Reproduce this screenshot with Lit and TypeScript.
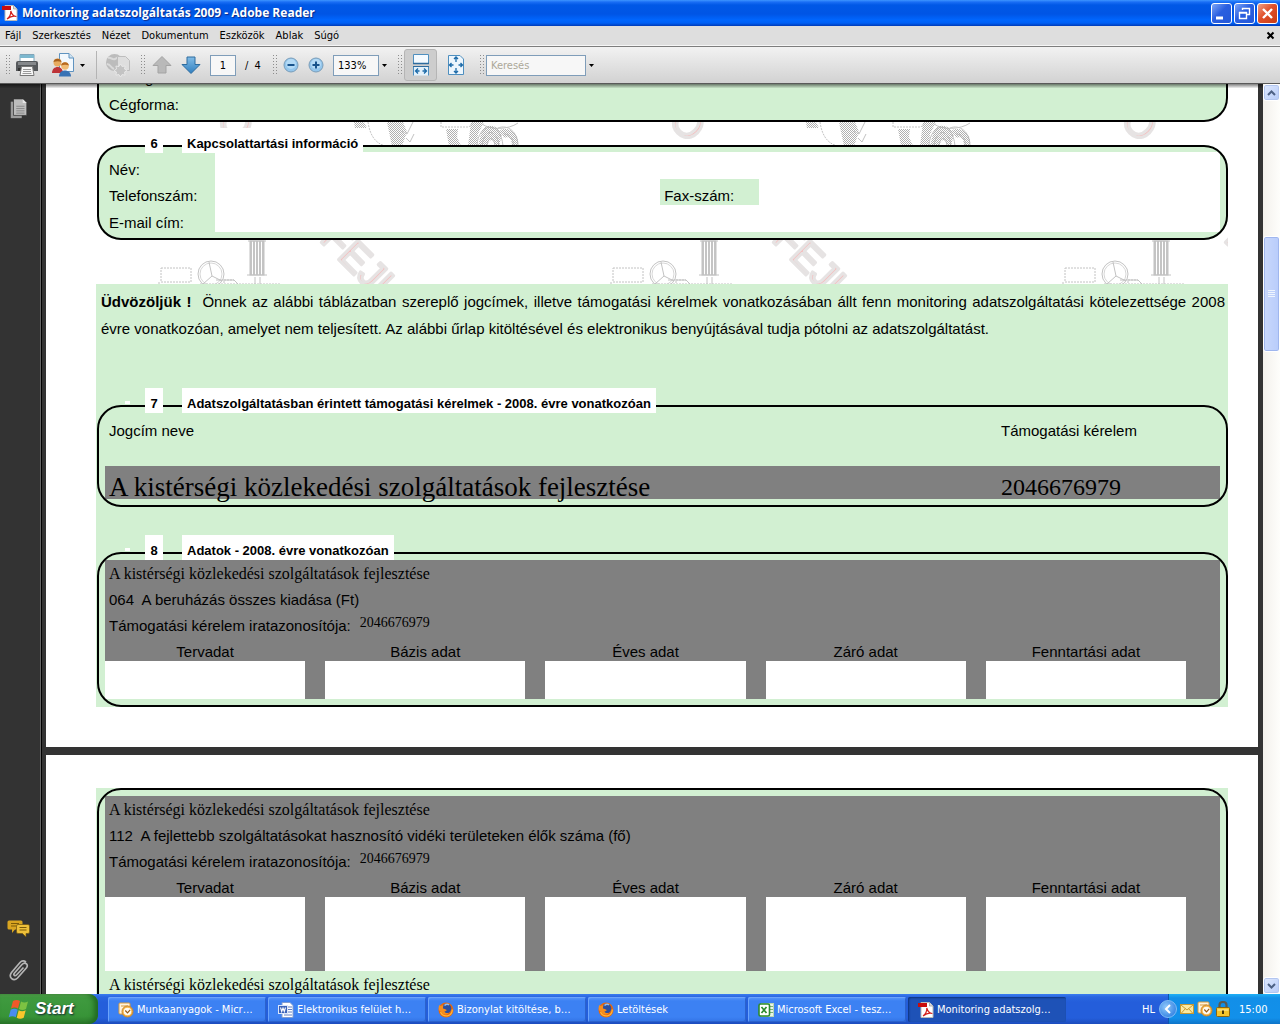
import { LitElement, html, svg, css } from "lit";
import { customElement, property } from "lit/decorators.js";

const pdfIcon = html`<svg class="i16" viewBox="0 0 16 16" aria-hidden="true">
  <path d="M3 .5h8.500l3.500 3.500v11.500H3z" fill="#fff" stroke="#b9b9b9"/>
  <path d="M11.500.5v3.500H15" fill="#ddd" stroke="#999" stroke-width=".7"/>
  <rect x="0" y="1" width="9" height="4" fill="#c90d0d"/>
  <path d="M5 14c2-1.500 4-5 3.800-8 1 3.500 3 5.500 5.500 5.500-3-1-6 0-9.300 2.500z" fill="none" stroke="#d3201c" stroke-width="1.200"/>
</svg>`;
const outlookIcon = html`<svg class="i16" viewBox="0 0 16 16" aria-hidden="true">
  <rect x="1" y="1" width="11" height="11" rx="1" fill="#fff3dc" stroke="#d99a3b"/>
  <path d="M3 4h7" stroke="#d99a3b"/>
  <circle cx="9.500" cy="9.500" r="5.500" fill="#f5b548" stroke="#c9852a"/>
  <circle cx="9.500" cy="9.500" r="3.800" fill="#fffaf0"/>
  <path d="M7.300 8.500l2.200 2.300 2.700-3" fill="none" stroke="#9a5a14" stroke-width="1.200"/>
</svg>`;
const wordIcon = html`<svg class="i16" viewBox="0 0 16 16" aria-hidden="true">
  <path d="M4 .5h8l3 3v12H4z" fill="#fff" stroke="#7f9bd0"/>
  <path d="M10 5h4M10 7.500h4M10 10h4M6 13h8" stroke="#5f7fc4"/>
  <rect x=".5" y="3.500" width="9" height="8" fill="#3b62b8" stroke="#dbe6fa"/>
  <path d="M2.500 5.500l1.200 4 1.300-3.500 1.300 3.500 1.200-4" fill="none" stroke="#fff" stroke-width="1.100"/>
</svg>`;
const excelIcon = html`<svg class="i16" viewBox="0 0 16 16" aria-hidden="true">
  <rect x="3.500" y="1.500" width="12" height="13" fill="#e9f5e6" stroke="#b9d6b4"/>
  <path d="M12 4.500h3M12 7.500h3M12 10.500h3" stroke="#7db376"/>
  <rect x="1" y="2" width="10.500" height="12" rx="1.500" fill="#fff" stroke="#2d8a2d" stroke-width="1.600"/>
  <path d="M3.500 5l5 6M8.500 5l-5 6" stroke="#2d8a2d" stroke-width="1.700"/>
</svg>`;
const firefoxIcon = html`<svg class="i16" viewBox="0 0 16 16" aria-hidden="true">
  <circle cx="8" cy="8" r="7.500" fill="#e8670e"/>
  <circle cx="8.500" cy="6.500" r="4.800" fill="#2b4fa0"/>
  <path d="M6.500 3.500c1-1 3-1.500 4.500-.8" stroke="#8fc0f0" stroke-width="1.500" fill="none"/>
  <path d="M1.200 3c-.5 1.500-.7 3-.4 5L4 11c1.500 2 5 2 6.500 0-2 .3-3.500-.3-4-1.500 1-.3 2-.7 2.300-1.500C7.500 7 6 7 5 6.500 5 5 5 4.200 5.800 3.300 4.300 3.200 3.500 3.500 3 4.200z" fill="#f78d1e"/>
  <path d="M2.500 10c1.500 3.200 4 4.300 7 3.800 3-.6 4.700-3 4.800-6.300" fill="none" stroke="#fcb93a" stroke-width="1.300"/>
</svg>`;

const icons = {
  print: html`<svg class="i24" viewBox="0 0 24 24" aria-hidden="true">
    <path d="M5 1.500h14V9H5z" fill="#fff" stroke="#7fa4b8"/><path d="M5 2h14v3H5z" fill="#7db8cf"/>
    <path d="M3 8h18a2 2 0 0 1 2 2v8H1v-8a2 2 0 0 1 2-2z" fill="#55585b"/>
    <path d="M3 9h18v3H3z" fill="#85888b"/><path d="M3 15h3v3H3z" fill="#333"/>
    <path d="M6.500 13.500h11l1.500 9H5z" fill="#f7f7f7" stroke="#777"/>
    <path d="M8 16.500h8M8 18.500h8M7.500 20.500h9" stroke="#999"/></svg>`,
  people: html`<svg class="i24" viewBox="0 0 24 24" aria-hidden="true">
    <path d="M8.500.5H18l4.500 4.500v13.500h-14z" fill="#f2f8fd" stroke="#5f93c0"/><path d="M18 .5V5h4.500" fill="#cfe3f2" stroke="#5f93c0"/>
    <circle cx="6.500" cy="9.500" r="4" fill="#e8ac60"/><path d="M2.500 9c.5-4.500 7.500-4.500 8 0-2-1-5-1.300-8 0z" fill="#a8601c"/>
    <path d="M1 20c0-8 11-8 11 0z" fill="#bd3338"/>
    <circle cx="14" cy="13" r="3.800" fill="#f0bb74"/><path d="M10 12.500c.5-4.500 7.500-4.500 8 0-2-1-5-1.300-8 0z" fill="#b86a20"/>
    <path d="M8 23.500c0-8 12-8 12 0z" fill="#3973b5"/></svg>`,
  review: html`<svg class="i26" viewBox="0 0 26 24" aria-hidden="true">
    <circle cx="9.500" cy="9.500" r="8.500" fill="#bcbcbc"/><path d="M3 5c3-1 4 2 7 1s3-3 6-2M2 11c3 0 4 4 7 5" stroke="#dadada" stroke-width="2" fill="none"/>
    <path d="M12.500 3.500h8l4 4v10h-12z" fill="#dedede" stroke="#bdbdbd"/>
    <path d="M15.500 11l1.600 2.600 3-.6-.6 3 2.600 1.500-2.600 1.600.6 3-3-.6-1.600 2.500-1.600-2.500-3 .6.6-3L9 17.500l2.500-1.500-.6-3 3 .6z" fill="#c3c3c3" stroke="#ececec" stroke-width=".8"/></svg>`,
  up: html`<svg class="i20" viewBox="0 0 20 20" aria-hidden="true"><path d="M10 1.500l9 9h-5v7.500H6v-7.500H1z" fill="#b9b9b9" stroke="#a3a3a3"/></svg>`,
  down: html`<svg class="i20" viewBox="0 0 20 20" aria-hidden="true">
    <defs><linearGradient id="dn" x2="0" y2="1"><stop offset="0" stop-color="#82bce6"/><stop offset="1" stop-color="#2f7fc0"/></linearGradient></defs>
    <path d="M10 18.500l9-9h-5V2H6v7.500H1z" fill="url(#dn)" stroke="#2e6c9f"/></svg>`,
  minus: html`<svg class="i16" viewBox="0 0 16 16" aria-hidden="true"><circle cx="8" cy="8" r="7" fill="#93c6ec" stroke="#7a9db9"/><circle cx="8" cy="7" r="5" fill="#b4daf5"/><path d="M4.500 8h7" stroke="#17538c" stroke-width="2"/></svg>`,
  plus: html`<svg class="i16" viewBox="0 0 16 16" aria-hidden="true"><circle cx="8" cy="8" r="7" fill="#93c6ec" stroke="#7a9db9"/><circle cx="8" cy="7" r="5" fill="#b4daf5"/><path d="M4.500 8h7M8 4.500v7" stroke="#17538c" stroke-width="2"/></svg>`,
  fitWidth: html`<svg class="i20" viewBox="0 0 20 22" aria-hidden="true">
    <path d="M2.500.5h15v9h-15z" fill="#f4faff" stroke="#4e8fbf"/><path d="M2 9.500h16" stroke="#2e6c9f" stroke-width="1.500"/>
    <path d="M2.500 21.500v-9h15v9" fill="#e3f1fb" stroke="#4e8fbf"/><path d="M2 12.500h16" stroke="#2e6c9f"/>
    <path d="M4.500 17h4M15.500 17h-4M7 14.500L4.500 17 7 19.500M13 14.500l2.500 2.500-2.500 2.500" fill="none" stroke="#1c6aa8" stroke-width="1.300"/></svg>`,
  fitPage: html`<svg class="i20" viewBox="0 0 20 22" aria-hidden="true">
    <path d="M2.500 1.500H14l3.500 3.500v15.500h-15z" fill="#edf6fd" stroke="#4e8fbf"/>
    <path d="M10 3v5M10 14v5M3.500 11h4M16.500 11h-4M8 5l2-2 2 2M8 17l2 2 2-2M5.500 9l-2 2 2 2M14.500 9l2 2-2 2" fill="none" stroke="#1c6aa8" stroke-width="1.300"/></svg>`,
  pages: html`<svg class="i20" viewBox="0 0 20 24" aria-hidden="true">
    <path d="M1 4h12v18H1z" fill="#9b9b9b"/><path d="M4 1h10l4.500 4.500V19H4z" fill="#bdbdbd" stroke="#333" stroke-width=".8"/><path d="M14 1v4.500h4.500z" fill="#e6e6e6"/>
    <path d="M7 9h9M7 11.500h9M7 14h9M7 16.500h9" stroke="#858585"/></svg>`,
  comments: html`<svg class="i24" viewBox="0 0 24 18" aria-hidden="true">
    <path d="M2 .5h12a1.500 1.500 0 0 1 1.500 1.500v6A1.500 1.500 0 0 1 14 9.500H8L5 13V9.500H2A1.500 1.500 0 0 1 .5 8V2A1.500 1.500 0 0 1 2 .5z" fill="#d9a520"/>
    <path d="M4 3.500h8M4 6h5" stroke="#7c5a08"/>
    <path d="M11 4.500h10A1.500 1.500 0 0 1 22.500 6v6a1.500 1.500 0 0 1-1.500 1.500h-2V17l-3.500-3.500H11A1.500 1.500 0 0 1 9.500 12V6A1.500 1.500 0 0 1 11 4.500z" fill="#eec03a" stroke="#6b5210" stroke-width=".7"/>
    <path d="M12.500 7.500h7M12.500 10h7" stroke="#7c5a08"/></svg>`,
  clip: html`<svg class="i24" viewBox="0 0 24 24" aria-hidden="true">
    <path d="M16.500 8.500L9.500 16c-1.500 1.500-3.500 0-2.200-1.800L15 5.500c3-3 7 0 4.500 3.300L10.500 19c-4 4-9.500-.5-6-5.500L13 3.500c1.500-1.700 4-2 6-.5" fill="none" stroke="#b5b5b5" stroke-width="1.700"/></svg>`,
  flag: html`<svg class="i24" viewBox="0 0 24 24" aria-hidden="true">
    <path d="M5 4c2.500-1.500 5-1.300 7 0l-2 7.500c-2-1.300-4.500-1.500-7 0z" fill="#f0582a"/>
    <path d="M13 4.500c2 1.300 4.500 1.500 7 0l-2 7.500c-2.500 1.500-5 1.300-7 0z" fill="#7cc242"/>
    <path d="M2.700 12.700c2.500-1.500 5-1.300 7 0l-2 7.500c-2-1.300-4.500-1.500-7 0z" fill="#4a8df0"/>
    <path d="M10.700 13.200c2 1.300 4.500 1.500 7 0l-2 7.500c-2.500 1.500-5 1.300-7 0z" fill="#fbc62c"/></svg>`,
  mail: html`<svg class="i16" viewBox="0 0 16 16" aria-hidden="true"><rect x="1.500" y="3.500" width="13" height="9" fill="#fbe9a0" stroke="#c79a32"/><path d="M2 4l6 5 6-5M2 12.500l4.500-5M14 12.500l-4.500-5" fill="none" stroke="#c79a32"/></svg>`,
  lock: html`<svg class="i16" viewBox="0 0 16 16" aria-hidden="true"><path d="M4.500 7V4c0-4 7-4 7 0v3" fill="none" stroke="#5a5a50" stroke-width="2.200"/><rect x="1.500" y="6.500" width="13" height="9" rx="1" fill="#f6c52c" stroke="#8a6410"/><path d="M2.500 9h11" stroke="#fff1b0"/><path d="M8 9.500v3.500" stroke="#4a3706" stroke-width="2"/></svg>`,
};

const shared = css`
  * { box-sizing: border-box; }
  button { font: inherit; color: inherit; border: 0; background: none; padding: 0; margin: 0; border-radius: 0; }
  input { font: inherit; color: inherit; border-radius: 0; margin: 0; outline: 0; min-width: 0; }
  svg { display: block; flex: none; }
  .i16 { width: 16px; height: 16px; }
  .i20 { width: 20px; height: 22px; }
  .i24 { width: 24px; height: 24px; }
  .i26 { width: 26px; height: 24px; }
`;

@customElement("title-bar")
class TitleBar extends LitElement {
  static styles = [shared, css`
    :host { display: block; flex: none; }
    .bar { display: flex; align-items: center; height: 26px; padding: 0 2px; gap: 4px; color: #fff;
      background: linear-gradient(#3d95ff 0, #1a6ef5 2px, #0058e6 5px, #0055e5 14px, #0066fe 20px, #0060f5 23px, #003bb8 26px);
      font: bold 12px/26px "Open Sans", sans-serif; }
    .name { flex: 1; margin: 0; font: inherit; text-shadow: 1px 1px 1px #0a2a88; white-space: nowrap; }
    .btns { display: flex; gap: 2px; }
    .btn { width: 21px; height: 21px; border: 1px solid #fff; border-radius: 3px; background: linear-gradient(135deg, #7ea6f7, #2a5fe0 45%, #2458d8); }
    .close { background: linear-gradient(135deg, #f0a085, #e0502a 45%, #c83c14); }
  `];
  render() {
    return html`<header class="bar">${pdfIcon}<h1 class="name">Monitoring adatszolgáltatás 2009 - Adobe Reader</h1>
      <div class="btns">
        <button class="btn" aria-label="Kis méret"><svg viewBox="0 0 19 19"><path d="M4 14h7" stroke="#fff" stroke-width="3"/></svg></button>
        <button class="btn" aria-label="Előző méret"><svg viewBox="0 0 19 19" fill="none" stroke="#fff"><path d="M7.500 6V4.500h7v6H12M7 4.500h8M4.500 8.500h7v6h-7zM4 9h8" stroke-width="1.400"/></svg></button>
        <button class="btn close" aria-label="Bezárás"><svg viewBox="0 0 19 19"><path d="M5 5l9 9M14 5l-9 9" stroke="#fff" stroke-width="2.400"/></svg></button>
      </div></header>`;
  }
}

@customElement("tool-bars")
class ToolBars extends LitElement {
  static styles = [shared, css`
    :host { display: block; flex: none; font: 11px/13px "DejaVu Sans Condensed", sans-serif; color: #000; }
    .menu { display: flex; align-items: center; gap: 11px; height: 20px; padding: 0 5px; background: #dedede; border-bottom: 1px solid #f6f6f6; }
    .doc { margin-left: auto; }
    .tools { display: flex; align-items: center; height: 38px; padding: 0 5px; border-top: 1px solid #7d7d7d; border-bottom: 1px solid #5a5a5a;
      background: linear-gradient(#f2f2f2, #d2d2d2); }
    .grp { display: flex; align-items: center; }
    .grip { width: 5px; height: 22px; background: radial-gradient(circle, #8d8d8d 1px, transparent 1px) 0 0 / 3px 3px; }
    .sep { width: 1px; height: 28px; background: #b4b4b4; }
    .drop { width: 11px; height: 22px; display: grid; place-items: center; }
    .field { height: 21px; border: 1px solid #7f9db9; background: #f7f7f7; padding: 0 4px; }
    .num { width: 26px; text-align: center; }
    .pct { width: 46px; }
    .find { width: 100px; }
    .find::placeholder { color: #aca899; opacity: 1; }
    .on { width: 33px; height: 32px; display: grid; place-items: center; border: 1px solid #b5b5b5; border-radius: 3px; background: #cdcdcd; }
    .file { gap: 8px; padding-left: 5px; width: 130px; }
    .people { margin-left: 4px; }
    .split { display: flex; align-items: center; gap: 2px; }
    .nav { gap: 9px; padding-left: 7px; width: 127px; }
    .zoom { gap: 9px; padding-left: 6px; width: 120px; }
    .view { gap: 9px; padding-left: 2px; width: 77px; }
    .search { padding-left: 2px; }
  `];
  render() {
    const arrow = html`<svg width="5" height="3" viewBox="0 0 5 3"><path d="M0 0h5L2.500 3z"/></svg>`;
    return html`
      <nav class="menu">
        ${["Fájl", "Szerkesztés", "Nézet", "Dokumentum", "Eszközök", "Ablak", "Súgó"].map(m => html`<button>${m}</button>`)}
        <button class="doc" aria-label="Dokumentum bezárása"><svg width="9" height="9" viewBox="0 0 9 9"><path d="M1.500 1.500l6 6M7.500 1.500l-6 6" stroke="#000" stroke-width="2"/></svg></button>
      </nav>
      <div class="tools" role="toolbar">
        <div class="grip"></div>
        <div class="grp file">
          <button aria-label="Nyomtatás">${icons.print}</button>
          <button class="split people" aria-label="Együttműködés">${icons.people}<span class="drop">${arrow}</span></button>
          <span class="sep"></span>
          <button aria-label="Véleményezés" disabled>${icons.review}</button>
        </div>
        <div class="grip"></div>
        <div class="grp nav">
          <button aria-label="Előző oldal" disabled>${icons.up}</button>
          <button aria-label="Következő oldal">${icons.down}</button>
          <input class="field num" aria-label="Oldal" .value=${"1"}><span>/&nbsp; 4</span>
        </div>
        <div class="grip"></div>
        <div class="grp zoom">
          <button aria-label="Kicsinyítés">${icons.minus}</button>
          <button aria-label="Nagyítás">${icons.plus}</button>
          <span class="grp"><input class="field pct" aria-label="Nagyítás mértéke" .value=${"133%"}><button class="drop" aria-label="Nagyítások">${arrow}</button></span>
        </div>
        <div class="grip"></div>
        <div class="grp view">
          <button class="on" aria-label="Ablakszélesség">${icons.fitWidth}</button>
          <button aria-label="Teljes oldal">${icons.fitPage}</button>
        </div>
        <div class="grip"></div>
        <div class="grp search">
          <input class="field find" aria-label="Keresés" placeholder="Keresés"><button class="drop" aria-label="Keresési lehetőségek">${arrow}</button>
        </div>
      </div>`;
  }
}

@customElement("form-page")
class FormPage extends LitElement {
  static styles = [shared, css`
    :host { display: block; color: #000; font: 15px/26px "Liberation Sans", sans-serif; }
    .page { position: relative; background: #fff; padding: 0 30px 40px 50px; overflow: hidden; }
    .page + .page { margin-top: 8px; padding-top: 33px; }
    .marks { position: absolute; left: 51px; top: 0; width: calc(100% - 81px); height: 210px; }
    .body { position: relative; }
    .frame { position: relative; margin-left: 1px; padding: 6px; border: 2px solid transparent; border-radius: 24px; }
    .frame::after { content: ""; position: absolute; inset: -2px; border: 2px solid #000; border-radius: 24px; pointer-events: none; }
    .tint { background: #d2f0d2 border-box; }
    .cut { border: solid #000; border-width: 0 2px 2px; border-radius: 0 0 24px 24px; padding: 0 10px 2px; height: 38px; display: flex; flex-direction: column; justify-content: flex-end; overflow: hidden; }
    .cut::after { display: none; }
    .cut .prev { padding-left: 36px; }
    .cut div { line-height: 27px; }
    .legend { position: relative; z-index: 1; display: flex; width: fit-content; height: 25px; padding-left: 49px; margin-bottom: -8px;
      font-weight: bold; font-size: 13px; line-height: 31px; white-space: nowrap; }
    .legend > * { background: #fff; margin: 0; font: inherit; }
    .legend .no { width: 18px; text-align: center; margin-right: 19px; }
    .legend .ti { padding: 0 5px; }
    .contact { margin-top: 6px; background: linear-gradient(#fff 17px, transparent 0); }
    .tick::before { content: ""; position: absolute; left: 29px; top: 13px; width: 5px; height: 3px; background: #fff; }
    .rows { padding-top: 5px; }
    .row { display: flex; height: 27px; }
    .row.mid { height: 26px; }
    .row label { flex: none; padding-left: 4px; line-height: 35px; height: 100%; width: 110px; background: #d2f0d2; }
    .row .fax { width: 99px; }
    .row.mid label { line-height: 33px; }
    .row input { flex: 1 1 0; border: 0; background: #fff; padding: 0 4px; }
    .row .wide { flex-grow: 461; }
    .row .tel { flex-grow: 445; }
    .green { background: #d2f0d2; margin-top: 44px; }
    .intro { margin: 0; padding: 4px 3px 0 5px; line-height: 27px; height: 104px; }
    .intro span { display: block; }
    .intro .just { text-align: justify; text-align-last: justify; }
    .grants { width: 100%; border-collapse: collapse; margin-top: 4px; }
    .grants th { text-align: left; font-weight: normal; height: 49px; padding: 0 4px 22px; }
    .grants th.a { width: 80%; }
    .grants td { background: #808080; height: 33px; padding: 10px 4px 0; line-height: 23px; font-size: 24px; }
    .grants td.big { font-size: 27px; }
    .serif { font-family: "Palatino Linotype", "Liberation Serif", serif; }
    .next { margin-top: 28px; }
    .entry { background: #808080; }
    .line { padding-left: 4px; line-height: 25px; height: 25px; white-space: pre; }
    .small { font-size: 16px; line-height: 27px; height: 27px; }
    .ref { line-height: 27px; height: 27px; display: flex; gap: 9px; }
    .ref .serif { font-size: 14px; line-height: 22px; }
    .cells { display: grid; grid-template-columns: repeat(5, minmax(0, 1fr)); column-gap: 20px; padding-right: 34px; }
    .cell { display: flex; flex-direction: column; text-align: center; }
    .cell label { height: 22px; line-height: 26px; }
    .cell input { width: 100%; height: 38px; border: 0; background: #fff; padding: 0 4px; }
    .tall .cell input { height: 74px; }
    .last { margin-top: 0; }
  `];

  private marks() {
    return html`<svg class="marks" aria-hidden="true">
      <defs>
        <pattern id="hatch" width="2" height="2" patternUnits="userSpaceOnUse">${svg`<path d="M0 0h1v1h-1zM1 1h1v1h-1z" fill="#b0b0b0"/>`}</pattern>
        <pattern id="bars" width="3" height="4" patternUnits="userSpaceOnUse">${svg`<path d="M0 0h2v4h-2z" fill="#c4c4c4"/>`}</pattern>
        <pattern id="tile" x="9" width="452" height="210" patternUnits="userSpaceOnUse">${svg`
          <g font-family="Liberation Sans" font-size="40" fill="#f8b8b8" stroke="#e6e3e3" stroke-width="3" stroke-linejoin="round">
            <text transform="translate(213 156) rotate(45)">FEJL</text>
            <text transform="translate(109 38) rotate(45)">O</text>
          </g>
          <g fill="none" stroke="#c2c2c2">
            <path d="M262 38c2 14 8 22 18 24" stroke-dasharray="2 1"/>
            <path d="M248 38h10l3 6h-12z" fill="url(#hatch)" stroke="none"/>
            <path d="M281 38h16l4 10-5 14h-10z" fill="url(#hatch)" stroke="none"/>
            <path d="M307 38l-6 12-5-3M300 54l4 4 4-8"/>
            <path d="M335 38v5h28l4-5" stroke-dasharray="2 1"/>
            <path d="M340 45h12l-1 8 4 9h-12z" fill="url(#hatch)" stroke="none"/>
            <path d="M365 38h13l-6 12-1 12h-9z" fill="url(#hatch)" stroke="none"/>
            <path d="M371 62c1-24 24-26 26 0M376 62c2-18 15-18 17 0M381 62c1-10 7-10 8 0M392 44c10-4 20 4 20 18M398 50c6 0 10 5 9 12M376 40c8 6 26 6 36-1"/>
            <path d="M376 46c6-8 16-4 20 4l-3 12h-4c-1-8-6-8-8 0h-9zM394 46c10-4 20 4 18 16h-6c0-8-4-10-8-8z" fill="url(#hatch)" stroke="none"/>
            <path d="M55 184h30v14H55zM53 198v4h40" stroke-dasharray="2 1"/>
            <circle cx="105" cy="190" r="13"/><circle cx="105" cy="190" r="11" stroke="#d6d6d6"/>
            <path d="M103 178l3 14M106 192l10 5M106 192l-9 8M110 196h18l6 6"/>
            <path d="M118 202v-6h10M94 200h80" stroke-dasharray="2 1"/>
            <rect x="144" y="157" width="14" height="34" fill="url(#bars)"/><path d="M142 157h18M141 191h20M149 193v8M154 193v8"/>
          </g>`}</pattern>
      </defs>
      <rect width="100%" height="210" fill="url(#tile)"></rect>
    </svg>`;
  }

  private entry(id: string, code: string) {
    const cols = ["Tervadat", "Bázis adat", "Éves adat", "Záró adat", "Fenntartási adat"];
    return html`
      <div class="line small serif">A kistérségi közlekedési szolgáltatások fejlesztése</div>
      <div class="line">${code}</div>
      <div class="line ref"><span>Támogatási kérelem iratazonosítója:</span><span class="serif">2046676979</span></div>
      <div class="cells">${cols.map((c, i) => html`<div class="cell"><label for="${id}${i}">${c}</label><input id="${id}${i}"></div>`)}</div>`;
  }

  render() {
    return html`
      <section class="page">
        ${this.marks()}
        <div class="body">
          <div class="frame tint cut"><div class="prev">g</div><div>Cégforma:</div></div>
          <div class="legend contact"><span class="no">6</span><h2 class="ti">Kapcsolattartási információ</h2></div>
          <div class="frame tint rows">
            <div class="row"><label for="n">Név:</label><input class="wide" id="n"></div>
            <div class="row mid"><label for="t">Telefonszám:</label><input class="tel" id="t"><label class="fax" for="f">Fax-szám:</label><input class="wide" id="f"></div>
            <div class="row"><label for="e">E-mail cím:</label><input class="wide" id="e"></div>
          </div>
          <div class="green">
            <p class="intro"><span class="just"><b>Üdvözöljük !</b>&nbsp; Önnek az alábbi táblázatban szereplő jogcímek, illetve támogatási kérelmek vonatkozásában állt fenn monitoring adatszolgáltatási kötelezettsége 2008</span><span>évre vonatkozóan, amelyet nem teljesített. Az alábbi űrlap kitöltésével és elektronikus benyújtásával tudja pótolni az adatszolgáltatást.</span></p>
            <div class="legend tick"><span class="no">7</span><h2 class="ti">Adatszolgáltatásban érintett támogatási kérelmek - 2008. évre vonatkozóan</h2></div>
            <div class="frame">
              <table class="grants">
                <tr><th class="a">Jogcím neve</th><th>Támogatási kérelem</th></tr>
                <tr class="serif"><td class="big">A kistérségi közlekedési szolgáltatások fejlesztése</td><td>2046676979</td></tr>
              </table>
            </div>
            <div class="legend tick next"><span class="no">8</span><h2 class="ti">Adatok - 2008. évre vonatkozóan</h2></div>
            <div class="frame"><div class="entry">${this.entry("a", "064  A beruházás összes kiadása (Ft)")}</div></div>
          </div>
        </div>
      </section>
      <section class="page">
        <div class="green last">
          <div class="frame">
            <div class="entry tall">${this.entry("b", "112  A fejlettebb szolgáltatásokat hasznosító vidéki területeken élők száma (fő)")}</div>
            <div class="line small serif">A kistérségi közlekedési szolgáltatások fejlesztése</div>
            <div class="line"></div>
          </div>
        </div>
      </section>`;
  }
}

@customElement("task-bar")
class TaskBar extends LitElement {
  @property({ attribute: false }) tasks = [
    { icon: outlookIcon, text: "Munkaanyagok - Micr…" },
    { icon: wordIcon, text: "Elektronikus felület h…" },
    { icon: firefoxIcon, text: "Bizonylat kitöltése, b…" },
    { icon: firefoxIcon, text: "Letöltések" },
    { icon: excelIcon, text: "Microsoft Excel - tesz…" },
    { icon: pdfIcon, text: "Monitoring adatszolg…", active: true },
  ];
  static styles = [shared, css`
    :host { display: block; flex: none; }
    .bar { display: flex; height: 30px; color: #fff; font: 11px/13px "DejaVu Sans Condensed", sans-serif;
      background: linear-gradient(#3a7df0 0, #2a66e0 3px, #245edb 8px, #245edb 24px, #1c4cbd 30px); }
    .start { display: flex; align-items: center; gap: 3px; width: 98px; padding-left: 8px; border-radius: 0 9px 9px 0;
      background: linear-gradient(#5eac56 0, #3f9a3f 4px, #389438 22px, #2c7a2c 30px); box-shadow: inset -4px 0 5px #226b22;
      font: italic bold 17px/30px "Liberation Sans", sans-serif; text-shadow: 1px 1px 2px #123; }
    .tasks { display: flex; flex: 1; min-width: 0; padding: 3px 0 2px 9px; }
    .task { flex: 0 1 158px; margin: 0 1px; display: flex; align-items: center; gap: 3px; padding: 0 10px; border-radius: 2px; white-space: nowrap;
      background: linear-gradient(#5a98fb 0, #3c81f3 4px, #3c81f3 20px, #3272e4); box-shadow: inset 1px 1px #6ba3fb, inset -1px -1px #2b62cc; }
    .active { background: #1e52b7; box-shadow: inset 1px 1px 2px #0e337c; }
    .lang { width: 18px; align-self: center; }
    .tray { display: flex; align-items: center; gap: 2px; width: 112px; margin-left: 8px; background: linear-gradient(#1fb0f5 0, #128fe8 4px, #1290ea 24px, #0d74c8); border-left: 1px solid #0a57b0; }
    .chev { margin-left: -10px; width: 18px; height: 18px; border-radius: 9px; display: grid; place-items: center; background: radial-gradient(circle at 6px 6px, #8fc8fb, #1b70dc); border: 1px solid #7fbcf5; }
    .time { margin-left: 6px; }
  `];
  render() {
    return html`<footer class="bar">
      <button class="start">${icons.flag}<span>Start</span></button>
      <div class="tasks">${this.tasks.map(t => html`<button class="task ${t.active ? "active" : ""}">${t.icon}<span>${t.text}</span></button>`)}</div>
      <span class="lang">HL</span>
      <div class="tray"><button class="chev" aria-label="Rejtett ikonok"><svg width="8" height="10" viewBox="0 0 8 10"><path d="M6 1L2 5l4 4" fill="none" stroke="#fff" stroke-width="2"/></svg></button>
        ${icons.mail}${outlookIcon}${icons.lock}<span class="time">15:00</span></div>
    </footer>`;
  }
}

@customElement("app-root")
class AppRoot extends LitElement {
  static styles = [shared, css`
    :host { display: flex; flex-direction: column; height: 100vh; overflow: hidden; }
    .main { flex: 1; min-height: 0; display: flex; position: relative; background: #333; }
    .main::before { content: ""; position: absolute; z-index: 2; left: 0; right: 17px; top: 0; height: 4px; background: linear-gradient(rgba(0,0,0,.5), rgba(0,0,0,.06)); }
    .side { width: 42px; display: flex; flex-direction: column; align-items: flex-start; gap: 18px; padding: 14px 0 11px 7px; border-right: 1px solid #000; box-shadow: inset -1px 0 #666; }
    .first { margin: 0 0 auto 2px; }
    .view { flex: 1; min-width: 0; overflow: hidden; padding: 0 5px 0 4px; }
    .scroll { width: 17px; display: flex; flex-direction: column; background: linear-gradient(90deg, #f3f1ec, #fefefb); }
    .arrow { height: 17px; display: grid; place-items: center; border: 1px solid #fff; border-radius: 3px; background: linear-gradient(135deg, #dfe9fe, #b6cbf8); box-shadow: inset 0 0 0 1px #b3c6ef; }
    .before { flex: 135; }
    .thumb { flex: 115; display: grid; place-items: center; border: 1px solid #fff; border-radius: 3px; background: linear-gradient(90deg, #c9d8fc, #b8ccfb); box-shadow: inset 0 0 0 1px #9fb6ee; }
    .after { flex: 626; }
  `];
  render() {
    return html`
      <title-bar></title-bar>
      <tool-bars></tool-bars>
      <main class="main">
        <aside class="side">
          <button class="first" aria-label="Oldalak">${icons.pages}</button>
          <button aria-label="Megjegyzések">${icons.comments}</button>
          <button aria-label="Mellékletek">${icons.clip}</button>
        </aside>
        <div class="view"><form-page></form-page></div>
        <div class="scroll">
          <button class="arrow" aria-label="Fel"><svg width="9" height="6" viewBox="0 0 9 6"><path d="M1 5l3.500-3.500L8 5" fill="none" stroke="#4d6185" stroke-width="2"/></svg></button>
          <div class="before"></div>
          <div class="thumb"><svg width="7" height="8" viewBox="0 0 7 8"><path d="M0 .5h7M0 2.500h7M0 4.500h7M0 6.500h7" stroke="#eef4fe"/></svg></div>
          <div class="after"></div>
          <button class="arrow" aria-label="Le"><svg width="9" height="6" viewBox="0 0 9 6"><path d="M1 1l3.500 3.500L8 1" fill="none" stroke="#4d6185" stroke-width="2"/></svg></button>
        </div>
      </main>
      <task-bar></task-bar>`;
  }
}
